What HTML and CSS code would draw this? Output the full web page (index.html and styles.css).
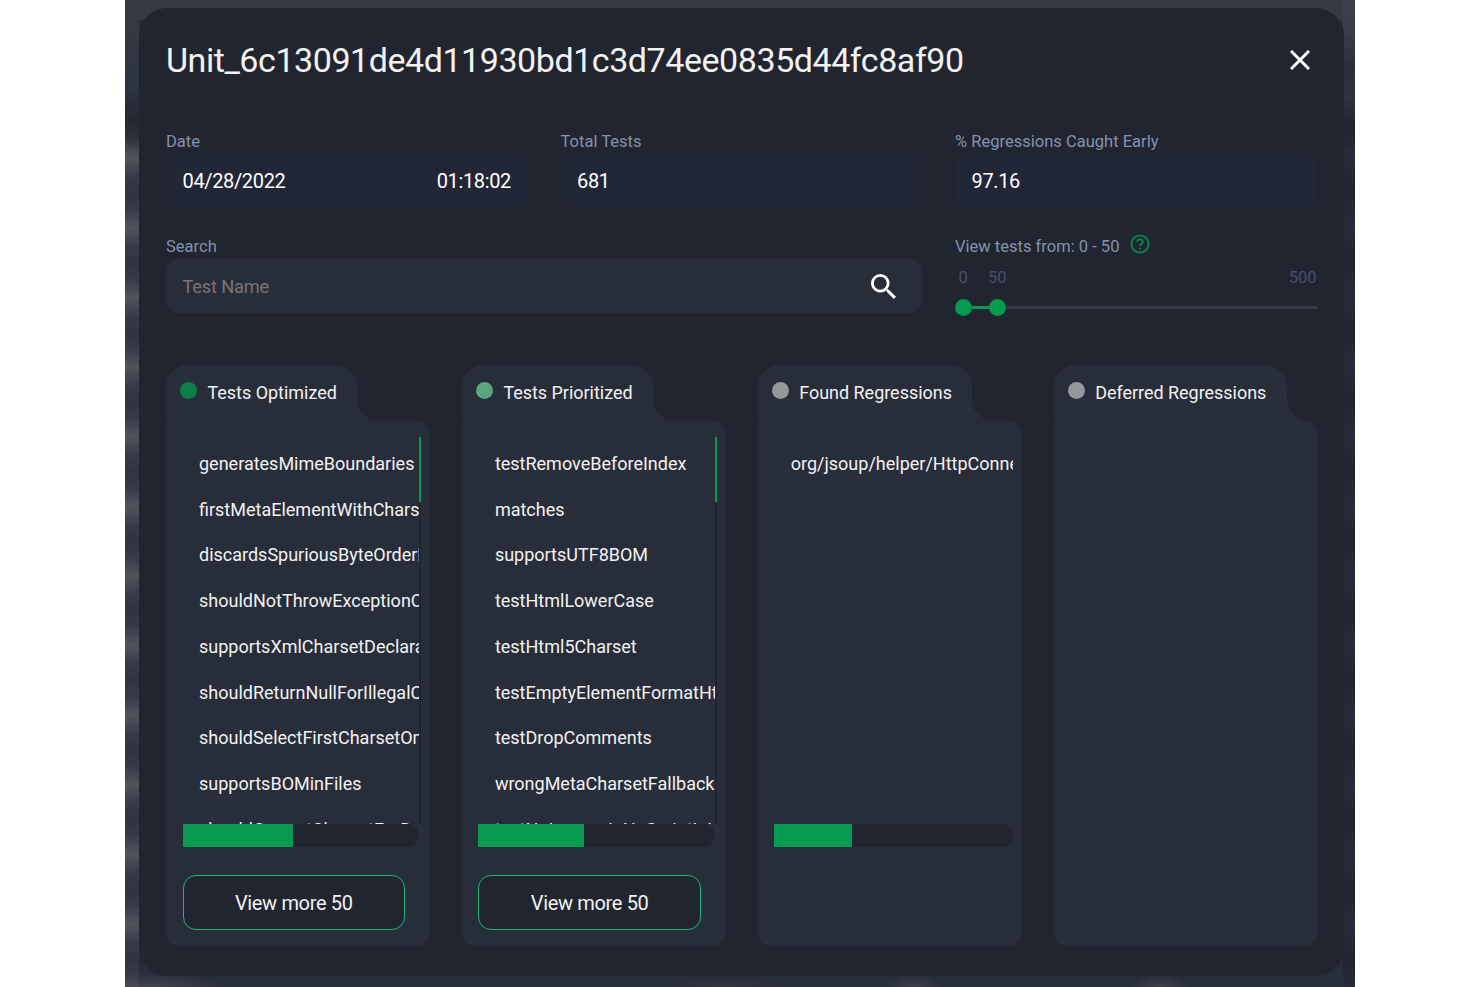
FILE: index.html
```
<!DOCTYPE html>
<html lang="en">
<head>
    <meta charset="UTF-8">
    <meta name="viewport" content="width=device-width, initial-scale=1.0">
    <title>Unit_6c13091de4d11930bd1c3d74ee0835d44fc8af90</title>
    <link rel="stylesheet" href="styles.css">
</head>
<body>

    <div class="overlay">
        <div class="modal">
            <div class="modal-header">
                <h1>Unit_6c13091de4d11930bd1c3d74ee0835d44fc8af90</h1>
                <svg class="close" viewBox="0 0 20 20"><path d="M1 1L19 19M19 1L1 19"/></svg>
            </div>

            <div class="info">
                <div class="field">
                    <label>Date</label>
                    <div class="value"><span>04/28/2022</span><span>01:18:02</span></div>
                </div>
                <div class="field">
                    <label>Total Tests</label>
                    <div class="value">681</div>
                </div>
                <div class="field">
                    <label>% Regressions Caught Early</label>
                    <div class="value">97.16</div>
                </div>
                <div class="field search">
                    <label>Search</label>
                    <div class="search-box">
                        <span>Test Name</span>
                        <svg class="search-icon" viewBox="3 3 17.5 17.5"><path d="M15.5 14h-.79l-.28-.27A6.471 6.471 0 0 0 16 9.5 6.5 6.5 0 1 0 9.5 16c1.61 0 3.09-.59 4.23-1.57l.27.28v.79l5 4.99L20.49 19l-4.99-5zm-6 0C7.01 14 5 11.99 5 9.5S7.01 5 9.5 5 14 7.01 14 9.5 11.99 14 9.5 14z"/></svg>
                    </div>
                </div>
                <div class="field">
                    <label class="range-label">View tests from: 0 - 50
                        <svg class="help" viewBox="0 0 20 20"><circle cx="10" cy="10" r="8.6"/><path d="M7.2 8a2.8 2.6 0 1 1 4.3 2.1c-.9.6-1.5 1-1.5 2"/><path d="M10 13.7v1.6"/></svg>
                    </label>
                    <div class="marks"><span class="mark-from">0</span><span class="mark-to">50</span><span>500</span></div>
                    <div class="slider">
                        <span class="knob"></span>
                        <span class="range"></span>
                        <span class="knob"></span>
                        <span class="rail"></span>
                    </div>
                </div>
            </div>

            <div class="columns">
                <div class="column">
                    <div class="tab"><i class="dot optimized"></i>Tests Optimized</div>
                    <div class="panel">
                        <div class="list scroll">
                            <p>generatesMimeBoundaries</p>
                            <p>firstMetaElementWithCharset</p>
                            <p>discardsSpuriousByteOrderMark</p>
                            <p>shouldNotThrowExceptionOnEmpty</p>
                            <p>supportsXmlCharsetDeclaration</p>
                            <p>shouldReturnNullForIllegalCharset</p>
                            <p>shouldSelectFirstCharsetOnWeird</p>
                            <p>supportsBOMinFiles</p>
                            <p>shouldCorrectCharsetForDuplicate</p>
                        </div>
                        <div class="progress"><div class="bar" style="width: 46.8%"></div></div>
                        <button>View more 50</button>
                    </div>
                </div>
                <div class="column">
                    <div class="tab"><i class="dot prioritized"></i>Tests Prioritized</div>
                    <div class="panel">
                        <div class="list scroll">
                            <p>testRemoveBeforeIndex</p>
                            <p>matches</p>
                            <p>supportsUTF8BOM</p>
                            <p>testHtmlLowerCase</p>
                            <p>testHtml5Charset</p>
                            <p>testEmptyElementFormatHtml</p>
                            <p>testDropComments</p>
                            <p>wrongMetaCharsetFallback</p>
                            <p>testNoImagesInNoScriptInHead</p>
                        </div>
                        <div class="progress"><div class="bar" style="width: 44.5%"></div></div>
                        <button>View more 50</button>
                    </div>
                </div>
                <div class="column">
                    <div class="tab"><i class="dot"></i>Found Regressions</div>
                    <div class="panel wide">
                        <div class="list">
                            <p>org/jsoup/helper/HttpConnection</p>
                        </div>
                        <div class="progress"><div class="bar" style="width: 32.6%"></div></div>
                    </div>
                </div>
                <div class="column">
                    <div class="tab"><i class="dot"></i>Deferred Regressions</div>
                    <div class="panel"></div>
                </div>
            </div>
        </div>
    </div>

</body>
</html>
```
FILE: styles.css
```
* {
    box-sizing: border-box;
}
body {
    margin: 0;
    background: #fff;
    font-family: Roboto, sans-serif;
    color: #f2f2f2;
    overflow: hidden;
}
.overlay {
    width: 1230px;
    height: 987px;
    margin: 0 auto;
    padding: 8px 11px 11px 13.5px;
    background:
        linear-gradient(#373a45 0, #343842 30px, #2c3341 90px, #22262f 120px, transparent 150px) 0 0 / 14px 150px no-repeat,
        repeating-linear-gradient(#50535e 0, #353a46 20px, #2f3440 35px, #353a46 50px, #50535e 69.6px) 0 19px / 14px 100% no-repeat,
        linear-gradient(#3c404b 0, #3a3e49 30px, #2a2e39 70px, #30343f 97px, #22252f 125px, transparent 150px) 100% 0 / 12px 150px no-repeat,
        repeating-linear-gradient(#22252f 0, #262c3a 36px, #22252f 70px) 100% 120px / 12px 100% no-repeat,
        linear-gradient(#373a45, #373a45) 0 0 / 100% 20px no-repeat,
        radial-gradient(ellipse 30px 12px at 1035px 987px, #3f404b, transparent),
        radial-gradient(ellipse 30px 12px at 790px 987px, #3a404a, transparent),
        radial-gradient(ellipse 60px 12px at 600px 987px, #32343f, transparent),
        radial-gradient(ellipse 75px 14px at 25px 987px, #42454f, transparent),
        #282d3a;
}
.modal {
    height: 968px;
    padding: 0 27.5px;
    background: #21252f;
    border-radius: 28px;
}
.modal-header {
    display: flex;
    align-items: center;
    justify-content: space-between;
    height: 104px;
    padding-right: 7px;
}
h1 {
    margin: 0;
    font-size: 34px;
    font-weight: 400;
    letter-spacing: -0.44px;
    line-height: 104px;
}
.close {
    width: 20px;
    height: 20px;
    fill: none;
    stroke: #fff;
    stroke-width: 3;
}
.info {
    display: grid;
    grid-template-columns: repeat(3, 1fr);
    column-gap: 33px;
    row-gap: 29px;
    padding-top: 20px;
}
label {
    display: block;
    height: 22px;
    font-size: 16.55px;
    line-height: 20px;
    color: #8293ad;
}
.value, .search-box {
    display: flex;
    align-items: center;
    justify-content: space-between;
    height: 54px;
    padding: 0 16.5px;
    border-radius: 12px;
    background: #222738;
    font-size: 20px;
    letter-spacing: -0.35px;
    color: #fff;
}
.search {
    grid-column: span 2;
}
.search-box {
    padding: 0 26px 0 16.5px;
    background: #282d3a;
    font-size: 18.3px;
    letter-spacing: -0.2px;
    color: #757575;
}
.search-icon {
    width: 25px;
    height: 25px;
    fill: #fff;
}
.range-label {
    display: flex;
    gap: 11px;
}
.help {
    width: 20px;
    height: 20px;
    margin-top: -3px;
    fill: none;
    stroke: #0e8049;
    stroke-width: 2;
}
.marks {
    display: flex;
    margin-top: 9px;
    font-size: 16.5px;
    line-height: 20px;
    color: #465069;
}
.mark-from {
    width: 33px;
    padding-left: 3.5px;
}
.mark-to {
    flex: 1;
}
.slider {
    display: flex;
    align-items: center;
    margin-top: 11px;
    margin-left: -0.5px;
}
.knob {
    width: 17px;
    height: 17px;
    border-radius: 50%;
    background: #059a50;
}
.range {
    width: 17px;
    height: 3px;
    background: #059a50;
}
.rail {
    flex: 1;
    height: 3px;
    background: #363a47;
}
.columns {
    display: grid;
    grid-template-columns: repeat(4, minmax(0, 1fr));
    gap: 33px;
    margin-top: 49px;
}
.tab {
    position: relative;
    display: flex;
    align-items: center;
    width: fit-content;
    height: 55px;
    padding: 0 20.5px 0 14px;
    border-radius: 22px 22px 0 0;
    background: #282d3a;
    font-size: 17.95px;
    white-space: nowrap;
}
/* inverted corner joining the tab to the panel */
.tab::after {
    content: "";
    position: absolute;
    left: 100%;
    bottom: 0;
    width: 19px;
    height: 19px;
    background: radial-gradient(circle at 100% 0, transparent 18.5px, #282d3a 19px);
}
.dot {
    width: 17px;
    height: 17px;
    margin: -4px 10.5px 0 0;
    border-radius: 50%;
    background: #96979b;
}
.optimized {
    background: #0c804a;
}
.prioritized {
    background: #5ba57f;
}
.panel {
    height: 525.5px;
    padding: 16px 8px 0 16.5px;
    border-top: 1px solid #242934;
    border-radius: 0 12px 12px 12px;
    background: #282d3a;
}
.list {
    height: 387px;
    padding: 4px 0 0 16.5px;
    overflow: hidden;
}
.scroll {
    width: 238.5px;
    border-right: 2.5px solid;
    border-image: linear-gradient(#059a50 66px, #21252f 66px) 1;
}
.list p {
    margin: 0;
    font-size: 18px;
    line-height: 45.7px;
    white-space: nowrap;
}
.progress {
    width: 236.5px;
    height: 23px;
    border-radius: 0 12px 12px 0;
    background: #21252f;
}
.wide .progress {
    width: 238.5px;
}
.bar {
    height: 23px;
    background: #059a50;
}
button {
    display: block;
    width: 222.5px;
    height: 55px;
    margin-top: 28px;
    border: 1.5px solid #1bb77a;
    border-radius: 13px;
    background: #21252f;
    font-family: inherit;
    font-size: 20px;
    letter-spacing: -0.35px;
    color: #f2f2f2;
}
```
